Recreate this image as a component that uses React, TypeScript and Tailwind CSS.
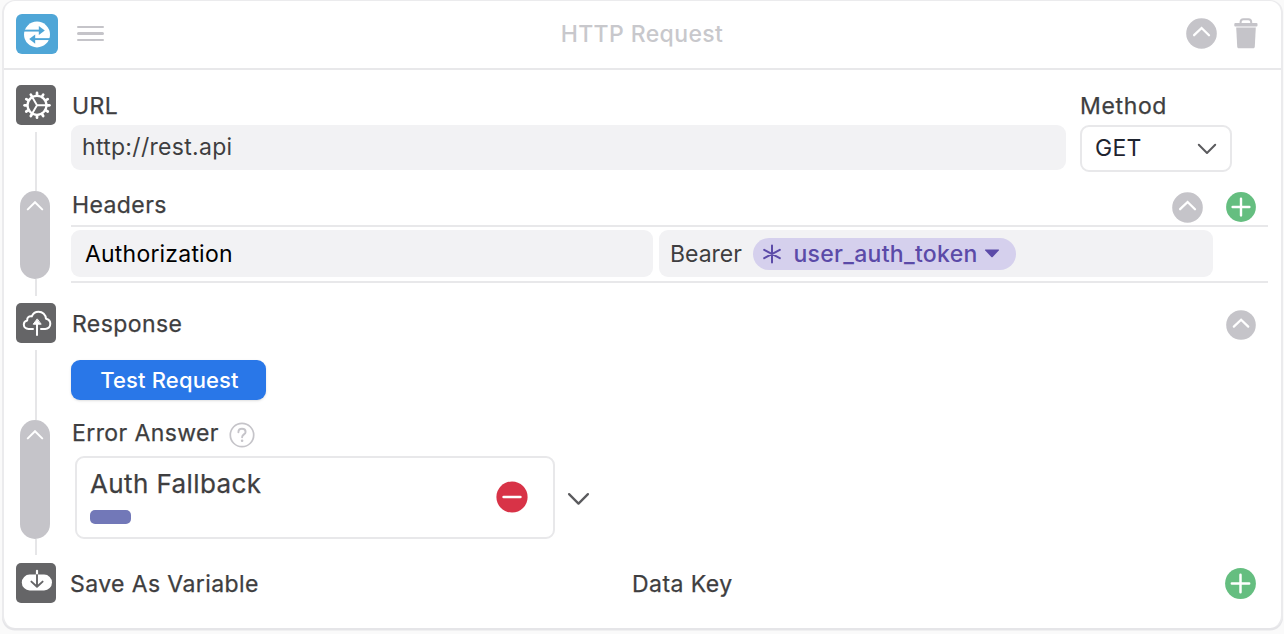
import React from "react";

type IconProps = { className?: string };

function SwapLogo({ className = "" }: IconProps) {
  return (
    <svg viewBox="0 0 42 40" className={className}>
      <ellipse cx="21" cy="20.5" rx="13" ry="12.9" fill="#fff" />
      <g stroke="#4fa6d7" strokeWidth="1.9" fill="none">
        <path d="M8 16.6H25" />
        <path d="M17 25.1H34" />
      </g>
      <path d="M22.8 11.9L28.8 16.5L22.8 21.1Z" fill="#4fa6d7" />
      <path d="M19.2 20.5L13.2 25.1L19.2 29.7Z" fill="#4fa6d7" />
    </svg>
  );
}

const TEETH = [0, 30, 60, 90, 120, 150, 180, 210, 240, 270, 300, 330];

function Gear({ className = "" }: IconProps) {
  return (
    <svg viewBox="0 0 40 40" className={className} stroke="#fff" fill="none">
      <circle cx="21" cy="20.3" r="9.5" strokeWidth="2.3" />
      {TEETH.map((a) => (
        <path
          key={a}
          d="M21 10V7.9"
          strokeWidth="2.7"
          strokeLinecap="round"
          transform={`rotate(${a} 21 20.3)`}
        />
      ))}
      <path d="M21 20.3H30M21 20.3L16.3 12.3M21 20.3L16.3 28.3" strokeWidth="1.9" />
    </svg>
  );
}

function CloudUpload({ className = "" }: IconProps) {
  return (
    <svg
      viewBox="0 0 40 40"
      className={className}
      stroke="#fff"
      fill="none"
      strokeWidth="2"
      strokeLinecap="round"
      strokeLinejoin="round"
    >
      <path d="M17 25.9H12.6C9.6 25.9 7.8 23.9 7.8 21.6C7.8 19.4 9.2 17.8 11.2 17.4C10.9 14.4 13.2 12.7 15.8 13.4C17 10.2 19.6 8.7 22.6 8.7C26.6 8.7 29.8 11.6 30 15.8C32.8 16.4 34.3 18.4 34.3 20.8C34.3 23.8 32.2 25.9 29.2 25.9H25" />
      <path d="M21 32V19" />
      <path d="M21 16.2L17.2 21.2H24.8Z" fill="#fff" strokeWidth="1" />
    </svg>
  );
}

function CloudDownload({ className = "" }: IconProps) {
  return (
    <svg viewBox="0 0 40 40" className={className} fill="none" strokeLinecap="round" strokeLinejoin="round">
      <rect x="5.8" y="11.6" width="30.2" height="15.8" rx="7.9" fill="#fff" />
      <path d="M21 7.8V12" stroke="#fff" strokeWidth="2.2" />
      <path d="M21 12V23.6M15.4 18.6L21 23.8L26.6 18.6" stroke="#656567" strokeWidth="1.9" />
    </svg>
  );
}

function Trash({ className = "" }: IconProps) {
  return (
    <svg viewBox="0 0 24 31" className={className} fill="#c5c4c9">
      <path
        d="M6.6 5.5V4C6.6 2.2 7.7 1.2 9.4 1.2H14.4C16.1 1.2 17.2 2.2 17.2 4V5.5"
        fill="none"
        stroke="#c5c4c9"
        strokeWidth="2"
      />
      <rect x="0.3" y="4.9" width="23.2" height="3.6" rx="1" />
      <path d="M2.2 9.6H21.8L20.8 28.4C20.7 29.7 20 30.3 18.8 30.3H5.2C4 30.3 3.3 29.7 3.2 28.4Z" />
    </svg>
  );
}

function Chevron({ className = "" }: IconProps) {
  return (
    <svg viewBox="0 0 20 12" className={className} fill="none" stroke="currentColor" strokeLinecap="round" strokeLinejoin="round">
      <path d="M1.8 1.8L10 10L18.2 1.8" strokeWidth="2" />
    </svg>
  );
}

function CollapseButton({ className = "" }: IconProps) {
  return (
    <button className={`shrink-0 ${className}`}>
      <svg viewBox="0 0 31 31" className="size-full" fill="none">
        <circle cx="15.5" cy="15.5" r="15.3" fill="#c5c4c9" />
        <path d="M8.1 17.2L15.6 10L23 17.2" stroke="#fff" strokeWidth="2.3" strokeLinecap="round" />
      </svg>
    </button>
  );
}

function AddButton({ className = "" }: IconProps) {
  return (
    <button className={`shrink-0 ${className}`}>
      <svg viewBox="0 0 30 30" className="size-full" fill="none">
        <circle cx="15" cy="15" r="14.9" fill="#65be80" />
        <path d="M15 6.6V23.4M6.6 15H23.4" stroke="#fff" strokeWidth="2.4" strokeLinecap="round" />
      </svg>
    </button>
  );
}

function Label({ className = "", children }: { className?: string; children: React.ReactNode }) {
  return <div className={`tracking-[0.4px] [-webkit-text-stroke:0.25px_#3e3e40] ${className}`}>{children}</div>;
}

function RailLine({ className }: { className: string }) {
  return <div className={`w-[2px] shrink-0 bg-[#e6e6e8] ${className}`} />;
}

function RailTile({ children }: { children: React.ReactNode }) {
  return <div className="size-10 shrink-0 rounded-[5px] bg-[#656567]">{children}</div>;
}

function RailPill({ className }: { className: string }) {
  return (
    <div className={`mr-[2px] flex w-[30px] shrink-0 justify-center rounded-full bg-[#c5c4c9] pt-[10px] ${className}`}>
      <svg viewBox="0 0 18 10" className="h-[10px] w-[18px]" fill="none">
        <path d="M1.8 8.4L9 1.2L16.2 8.4" stroke="#fff" strokeWidth="2" strokeLinecap="round" />
      </svg>
    </div>
  );
}

function Rail() {
  return (
    <div className="flex w-10 shrink-0 flex-col items-center">
      <RailTile>
        <Gear className="size-10" />
      </RailTile>
      <RailLine className="mt-[7px] h-[59px]" />
      <RailPill className="h-[88px]" />
      <RailLine className="mb-[7px] h-[17px]" />
      <RailTile>
        <CloudUpload className="size-10" />
      </RailTile>
      <RailLine className="mt-[7px] h-[70px]" />
      <RailPill className="h-[119px]" />
      <RailLine className="mb-[8px] h-[16px]" />
      <RailTile>
        <CloudDownload className="size-10" />
      </RailTile>
    </div>
  );
}

export default function App() {
  return (
    <div className="flex h-[634px] w-[1284px] flex-col overflow-hidden bg-[#fafafa] pl-[2px] pr-[1px] font-['Inter',sans-serif] text-[23px] leading-[28px] text-[#3e3e40]">
      <section className="flex h-[628px] flex-col rounded-[13px] border-x-2 border-t border-[#ebebed] bg-white shadow-[0_2.5px_0_#e5e5e8]">
        <header className="flex h-[69px] shrink-0 items-center border-b-2 border-[#e8e8ea] pb-[2px] pl-3 pr-[23px]">
          <div className="h-10 w-[42px] rounded-[6px] bg-[#4fa6d7]">
            <SwapLogo className="h-10 w-[42px]" />
          </div>
          <div className="ml-[19px] flex w-[27px] flex-col gap-1">
            <div className="h-[2.4px] rounded-full bg-[#c5c4c9]" />
            <div className="h-[2.4px] rounded-full bg-[#c5c4c9]" />
            <div className="h-[2.4px] rounded-full bg-[#c5c4c9]" />
          </div>
          <h1 className="flex-1 pr-[6px] text-center font-medium tracking-[0.4px] text-[#c8c8cc]">HTTP Request</h1>
          <CollapseButton className="size-[31px]" />
          <Trash className="ml-[17px] h-[31px] w-6" />
        </header>

        <div className="flex flex-1 pl-3 pt-[15px]">
          <Rail />
          <div className="ml-[15px] flex w-[1197px] flex-col">
            <div className="flex h-[86px] gap-[14px]">
              <div className="w-[995px]">
                <Label className="h-10 pl-px pt-[7px]">URL</Label>
                <div className="h-[45px] rounded-[9px] bg-[#f2f2f4] pl-[11px] pt-2 tracking-[0.3px]">http://rest.api</div>
              </div>
              <div className="w-[152px]">
                <Label className="h-10 pt-[7px] tracking-[0.65px]">Method</Label>
                <div className="flex h-[47px] items-center justify-between rounded-[9px] border-2 border-[#e8e8ea] pb-[2px] pl-[13px] pr-[13px] tracking-[0.3px] text-[#1f2430]">
                  GET
                  <Chevron className="mt-[2px] h-3 w-5 text-[#5b5b5e]" />
                </div>
              </div>
            </div>

            <div className="mt-[20px] flex h-9 items-start border-b-2 border-[#e8e8ea] pr-[12.5px]">
              <Label className="flex-1 pl-px">Headers</Label>
              <CollapseButton className="mt-px size-[31px]" />
              <AddButton className="ml-[23px] mt-px size-[30px]" />
            </div>
            <div className="flex h-[56px] gap-[6px] border-b-2 border-[#e8e8ea] pt-[3px]">
              <div className="flex h-[47px] w-[582px] items-center rounded-[9px] bg-[#f2f2f4] pl-[14px] tracking-[0.2px] text-black">
                Authorization
              </div>
              <div className="flex h-[47px] w-[554px] items-center rounded-[9px] bg-[#f2f2f4] pl-[11px]">
                <span>Bearer</span>
                <div className="ml-[11px] flex h-8 w-[263px] items-center rounded-full bg-[#d5d0ed] pl-[10.5px] text-[#5b4aa8]">
                  <svg viewBox="0 0 18 20" className="h-5 w-[18px]" stroke="currentColor" strokeWidth="2" strokeLinecap="round">
                    <path d="M9 1.4V18.6M1.2 5.8L16.8 14.2M1.2 14.2L16.8 5.8" />
                  </svg>
                  <span className="ml-3 w-[186px] font-medium tracking-[0.3px]">user_auth_token</span>
                  <svg viewBox="0 0 16 9" className="ml-[5px] h-[9px] w-4 shrink-0" fill="currentColor">
                    <path d="M1.4 0.6H14.6Q15.4 0.8 14.8 1.5L8.7 8Q8 8.6 7.3 8L1.2 1.5Q0.6 0.8 1.4 0.6Z" />
                  </svg>
                </div>
              </div>
            </div>

            <div className="mt-[27px] flex h-[50px] items-start justify-between pr-[12.5px]">
              <Label className="pl-px">Response</Label>
              <CollapseButton className="size-[30px]" />
            </div>
            <button className="h-[39.5px] w-[195px] rounded-[9px] bg-[#2977e8] pl-[2px] pt-px text-[22px] font-medium tracking-[0.15px] text-white shadow-sm">
              Test Request
            </button>

            <div className="mt-[19.5px] flex h-[37px] items-start">
              <Label className="pl-px">Error Answer</Label>
              <svg viewBox="0 0 26 26" className="ml-[10px] mt-[3px] size-[26px]" fill="none" stroke="#c5c4c9" strokeLinecap="round">
                <circle cx="13" cy="13" r="11.7" strokeWidth="1.7" />
                <path d="M9.4 10.2C9.4 8 10.9 6.8 13 6.8C15.1 6.8 16.6 8.1 16.6 9.9C16.6 12.4 13.1 12.4 13.1 15.2" strokeWidth="1.9" />
                <circle cx="13.1" cy="18.8" r="0.6" strokeWidth="1.4" />
              </svg>
            </div>
            <div className="ml-1 flex items-center">
              <div className="flex h-[82.5px] w-[480px] items-center justify-between rounded-[9px] border-2 border-[#e8e8ea] pl-[13px] pr-[25px]">
                <div className="pb-[2px]">
                  <Label className="text-[26px] leading-8">Auth Fallback</Label>
                  <div className="mt-[10px] h-[14px] w-[41px] rounded-[5px] bg-[#7278b8]" />
                </div>
                <svg viewBox="0 0 32 32" className="size-8" fill="none">
                  <circle cx="16" cy="16" r="15.6" fill="#d83347" />
                  <path d="M7.6 16H24.4" stroke="#fff" strokeWidth="2.6" strokeLinecap="round" />
                </svg>
              </div>
              <Chevron className="ml-3 mt-[3px] h-[14px] w-[23px] text-[#5b5b5e]" />
            </div>

            <div className="mt-[29.5px] flex items-center pr-[12px]">
              <Label className="-ml-px w-[562px] tracking-[0.3px]">Save As Variable</Label>
              <Label className="flex-1 tracking-[0.45px]">Data Key</Label>
              <AddButton className="size-[31px]" />
            </div>
          </div>
        </div>
      </section>
    </div>
  );
}
